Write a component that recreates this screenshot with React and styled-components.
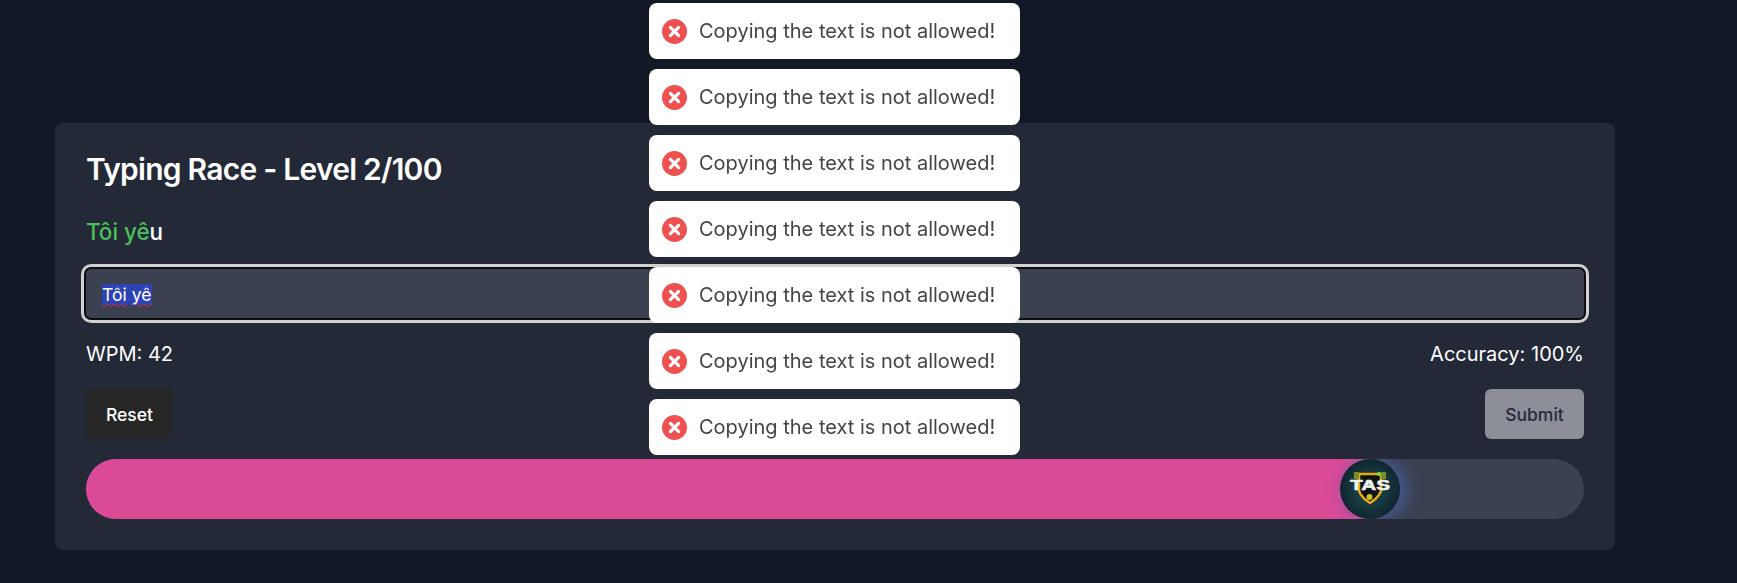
import React from "react";
import styled, { createGlobalStyle } from "styled-components";

const GlobalStyle = createGlobalStyle`
  html, body {
    margin: 0;
    padding: 0;
    height: 100%;
    background: #121826;
    font-family: "Inter", "Liberation Sans", sans-serif;
  }
`;

const Page = styled.main`
  box-sizing: border-box;
  min-height: 583px;
  padding: 123px 122px 33px 55px;
`;

const Card = styled.section`
  box-sizing: border-box;
  width: 1560px;
  padding: 31px;
  background: #232936;
  border-radius: 8px;
  color: #fff;
`;

const Title = styled.h1`
  margin: 0 0 32px;
  font-size: 30px;
  line-height: 30px;
  font-weight: 600;
  letter-spacing: -0.025em;
`;

const Sentence = styled.p`
  margin: 0 0 21px;
  font-size: 22.4px;
  line-height: 32px;
  font-weight: 500;
  color: #fff;
`;

const Typed = styled.span`
  color: #4ac05c;
`;

const InputBox = styled.div`
  box-sizing: border-box;
  height: 49px;
  margin-bottom: 22px;
  padding: 2px 16px 0;
  display: flex;
  align-items: center;
  background: #3b4151;
  border-radius: 5px;
  box-shadow: 0 0 0 2px #0d0d0d, 0 0 0 5px #d0d0d0;
  font-size: 17.6px;
  color: #fff;
`;

const Selected = styled.span`
  display: inline-block;
  height: 21px;
  line-height: 21px;
  background: #2f42b4;
  white-space: pre;
`;

const Misspelled = styled.span`
  text-decoration: underline wavy #e0263c 1px;
  text-underline-offset: 2px;
`;

const Stats = styled.div`
  display: flex;
  justify-content: space-between;
  margin-bottom: 21px;
  font-size: 20px;
  line-height: 28px;
`;

const Actions = styled.div`
  display: flex;
  justify-content: space-between;
  margin-bottom: 20px;
`;

const Button = styled.button`
  box-sizing: border-box;
  height: 50px;
  width: ${(props) => (props.$disabled ? "99px" : "87px")};
  border: none;
  border-radius: 6px;
  font-family: inherit;
  font-size: 17.5px;
  font-weight: 500;
  background: ${(props) => (props.$disabled ? "#8c8f98" : "#262626")};
  color: ${(props) => (props.$disabled ? "#262b38" : "#fff")};
`;

const Track = styled.div`
  position: relative;
  height: 60px;
  border-radius: 30px;
  background: #3b4151;
  overflow: hidden;
`;

const Fill = styled.div`
  height: 100%;
  background: #db4a97;
`;

const Racer = styled.div`
  position: absolute;
  top: 0;
  width: 60px;
  height: 60px;
  margin-left: -30px;
  border-radius: 50%;
  box-shadow: 5px 0 16px 2px rgba(72, 98, 170, 0.75);

  svg {
    display: block;
  }
`;

const ToastStack = styled.div`
  position: fixed;
  top: 3px;
  left: 649px;
  display: flex;
  flex-direction: column;
  gap: 10px;
`;

const Toast = styled.div`
  box-sizing: border-box;
  width: 371px;
  height: 56px;
  padding: 0 13px;
  display: flex;
  align-items: center;
  gap: 12px;
  background: #fff;
  border-radius: 8px;
  color: #444;
  font-size: 20px;
  white-space: nowrap;
`;

const ErrorIcon = () => (
  <svg width="25" height="25" viewBox="0 0 25 25" style={{ flexShrink: 0 }}>
    <circle cx="12.5" cy="12.5" r="12.5" fill="#ef5050" />
    <path d="M8.4 8.4 16.6 16.6M16.6 8.4 8.4 16.6" stroke="#fff" strokeWidth="3.2" strokeLinecap="round" />
  </svg>
);

const RacerLogo = () => (
  <svg width="60" height="60" viewBox="0 0 60 60">
    <defs>
      <radialGradient id="racerBg" cx="50%" cy="50%" r="50%">
        <stop offset="0%" stopColor="#1f5056" />
        <stop offset="100%" stopColor="#10262f" />
      </radialGradient>
    </defs>
    <circle cx="30" cy="30" r="30" fill="url(#racerBg)" />
    <path d="M19 15h22v17c-2 5-6 9-11 12-5-3-9-7-11-12z" fill="#0e1415" stroke="#e8a812" strokeWidth="2.5" />
    <rect x="14" y="13" width="5" height="7" fill="#7d8f22" />
    <rect x="41" y="13" width="5" height="7" fill="#7d8f22" />
    <circle cx="39" cy="15" r="2" fill="#6ee04a" />
    <circle cx="29.5" cy="38" r="3" fill="#c8c41e" />
    <circle cx="29.5" cy="25" r="4" fill="#5fae86" />
    <text x="30" y="31" textAnchor="middle" textLength="40" lengthAdjust="spacingAndGlyphs" fontFamily="Liberation Sans, sans-serif" fontSize="14" fontWeight="700" fill="#f2f2f2" stroke="#f2f2f2" strokeWidth="0.5">TAS</text>
  </svg>
);

const toasts = [0, 1, 2, 3, 4, 5, 6];
const progress = (6 / 7) * 100;

const App = () => (
  <>
    <GlobalStyle />
    <Page>
      <Card>
        <Title>Typing Race - Level 2/100</Title>
        <Sentence>
          <Typed>Tôi yê</Typed>u
        </Sentence>
        <InputBox>
          <Selected>
            <Misspelled>Tôi</Misspelled> <Misspelled>yê</Misspelled>
          </Selected>
        </InputBox>
        <Stats>
          <span>WPM: 42</span>
          <span>Accuracy: 100%</span>
        </Stats>
        <Actions>
          <Button>Reset</Button>
          <Button $disabled>Submit</Button>
        </Actions>
        <Track>
          <Fill style={{ width: `${progress}%` }} />
          <Racer style={{ left: `${progress}%` }}>
            <RacerLogo />
          </Racer>
        </Track>
      </Card>
    </Page>
    <ToastStack>
      {toasts.map((id) => (
        <Toast key={id}>
          <ErrorIcon />
          Copying the text is not allowed!
        </Toast>
      ))}
    </ToastStack>
  </>
);

export default App;
